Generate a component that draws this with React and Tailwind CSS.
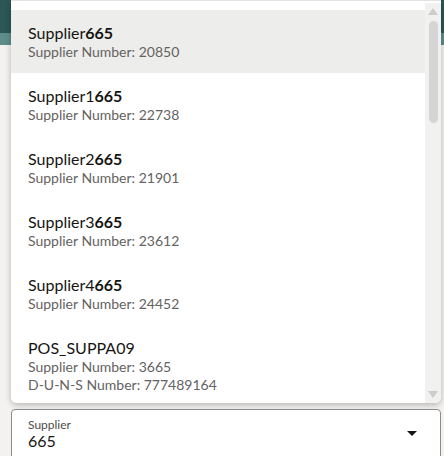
import React from "react";

const suppliers = [
  { pre: "Supplier", hit: "665", lines: ["Supplier Number: 20850"], active: true },
  { pre: "Supplier1", hit: "665", lines: ["Supplier Number: 22738"] },
  { pre: "Supplier2", hit: "665", lines: ["Supplier Number: 21901"] },
  { pre: "Supplier3", hit: "665", lines: ["Supplier Number: 23612"] },
  { pre: "Supplier4", hit: "665", lines: ["Supplier Number: 24452"] },
  { pre: "POS_SUPPA09", hit: "", lines: ["Supplier Number: 3665", "D-U-N-S Number: 777489164"] },
];

function Option({ item }) {
  return (
    <li
      className={`px-[17px] pt-[13px] pb-3 ${item.active ? "bg-[#ededeb]" : "bg-white"}`}
    >
      <div className="text-[16px] leading-[20px] text-[#161513]">
        {item.pre}
        {item.hit && <span className="font-bold">{item.hit}</span>}
      </div>
      {item.lines.map((l) => (
        <div key={l} className="text-[14px] leading-[18px] text-[#65625f]">
          {l}
        </div>
      ))}
    </li>
  );
}

function Scrollbar() {
  return (
    <div className="w-4 shrink-0 bg-[#f1f1f1] flex flex-col items-center pt-[5px] pb-[5px] mt-[2px]">
      <div className="w-0 h-0 border-l-[5px] border-r-[5px] border-b-[7px] border-l-transparent border-r-transparent border-b-[#cdcdcd]" />
      <div className="mt-[6px] w-[9px] h-[102px] rounded-full bg-[#d5d5d5]" />
      <div className="flex-1" />
      <div className="w-0 h-0 border-l-[5px] border-r-[5px] border-t-[7px] border-l-transparent border-r-transparent border-t-[#cdcdcd]" />
    </div>
  );
}

export default function App() {
  return (
    <div
      className="relative w-[444px] h-[456px] overflow-hidden bg-[#f4f2f0]"
      style={{ fontFamily: "Lato, 'Noto Sans', sans-serif" }}
    >
      {/* page header band behind the popup */}
      <div className="h-[33px] bg-[#2d5656]" />
      <div className="h-[12px] bg-[#5f8d89]" />

      {/* Supplier field */}
      <div className="mt-[364px] ml-[11px] w-[430px] h-[60px] border border-[#8d8a87] rounded-t-[4px] bg-white flex justify-between pr-[23px]">
        <div className="pl-4 pt-[8px]">
          <div className="text-[12px] leading-[14px] text-[#4f4c49]">Supplier</div>
          <div className="text-[16px] leading-[18px] text-[#161513]">665</div>
        </div>
        <div className="mt-[21px] w-0 h-0 border-l-[5px] border-r-[5px] border-t-[5px] border-l-transparent border-r-transparent border-t-[#161513]" />
      </div>

      {/* dropdown list */}
      <div className="absolute left-[11px] top-0 w-[430px] h-[403px] bg-white rounded-b-[6px] border-t border-[#e2e2e2] shadow-[0_2px_6px_rgba(0,0,0,0.25)] flex overflow-hidden">
        <ul className="flex-1 pt-[9px] overflow-hidden">
          {suppliers.map((s) => (
            <Option key={s.pre} item={s} />
          ))}
        </ul>
        <Scrollbar />
      </div>
    </div>
  );
}
